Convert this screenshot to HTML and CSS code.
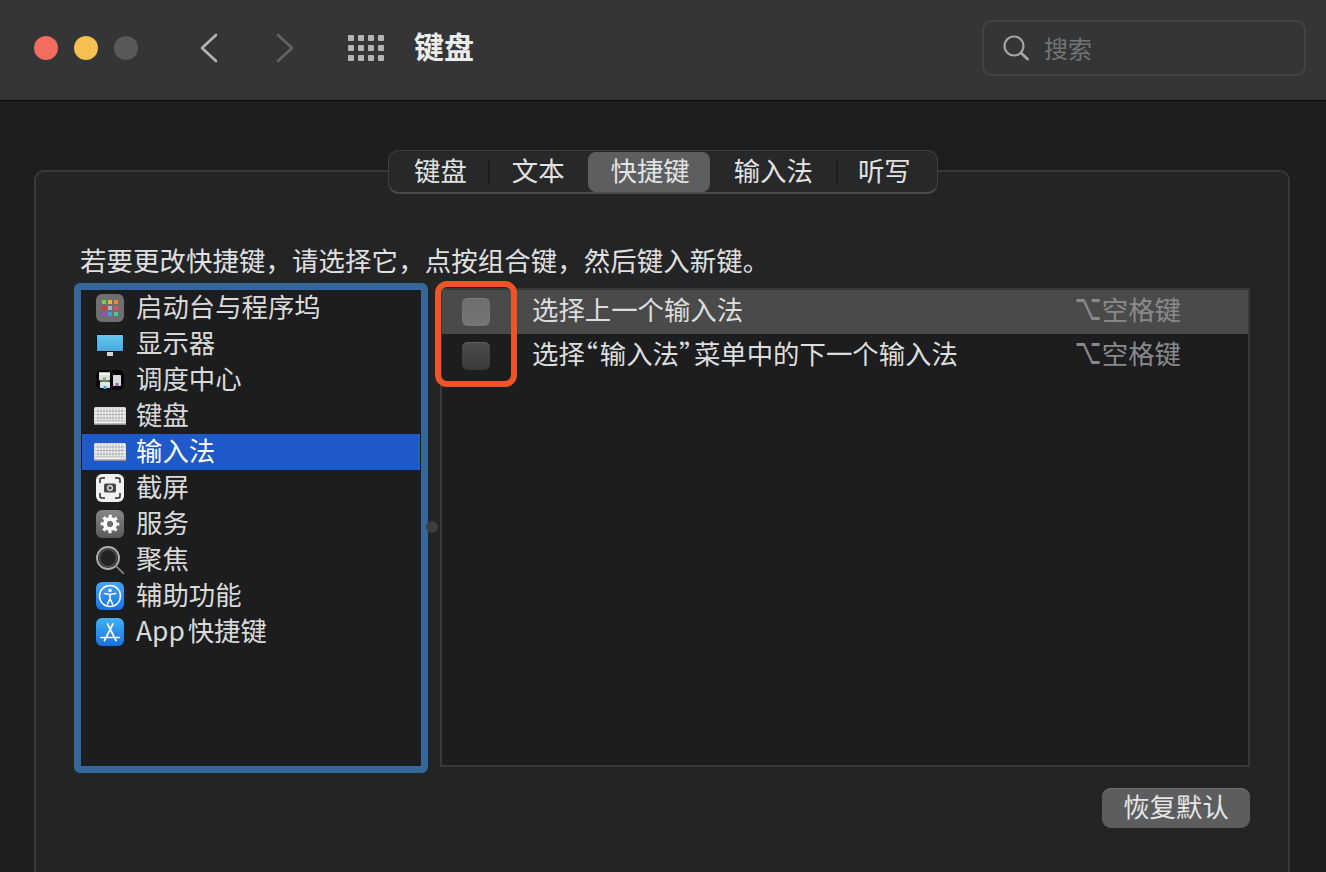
FILE: index.html
```html
<!DOCTYPE html>
<html lang="zh-CN">
<head>
<meta charset="utf-8">
<title>键盘</title>
<link rel="stylesheet" href="styles.css">
</head>
<body>
<div class="window">
  <header class="titlebar">
    <div class="lights">
      <span class="light red"></span>
      <span class="light yellow"></span>
      <span class="light gray"></span>
    </div>
    <svg class="chev back" width="20" height="30" viewBox="0 0 20 30"><path d="M17 2 3 15l14 13" fill="none" stroke="#b4b4b5" stroke-width="2.6" stroke-linecap="round" stroke-linejoin="round"/></svg>
    <svg class="chev forward" width="20" height="30" viewBox="0 0 20 30"><path d="M3 2l14 13L3 28" fill="none" stroke="#636466" stroke-width="2.6" stroke-linecap="round" stroke-linejoin="round"/></svg>
    <div class="grid-icon">
      <i></i><i></i><i></i><i></i><i></i><i></i><i></i><i></i><i></i><i></i><i></i><i></i>
    </div>
    <h1 class="title">键盘</h1>
    <div class="search">
      <svg width="28" height="28" viewBox="0 0 28 28"><circle cx="12" cy="12" r="9.5" fill="none" stroke="#a5a5a6" stroke-width="2.2"/><path d="M19 19l6.5 6" stroke="#a5a5a6" stroke-width="3" stroke-linecap="round"/></svg>
      <span>搜索</span>
    </div>
  </header>

  <main class="content">
    <section class="panel">
      <nav class="tabs">
        <span class="tab t1">键盘</span>
        <span class="sep"></span>
        <span class="tab t2">文本</span>
        <span class="tab t3 active">快捷键</span>
        <span class="tab t4">输入法</span>
        <span class="sep"></span>
        <span class="tab t5">听写</span>
      </nav>
      <p class="hint">若要更改快捷键，请选择它，点按组合键，然后键入新键。</p>
      <div class="columns">
        <ul class="sidebar">
          <li class="item">
            <svg class="ic" viewBox="0 0 28 28"><rect width="28" height="28" rx="6" fill="#6f6f70"/><g><rect x="6" y="6" width="4" height="4" fill="#6fcf5f"/><rect x="12" y="6" width="4" height="4" fill="#f0b429"/><rect x="18" y="6" width="4" height="4" fill="#ee8a2d"/><rect x="6" y="12" width="4" height="4" fill="#e0352f"/><rect x="12" y="12" width="4" height="4" fill="#a9b4b8"/><rect x="18" y="12" width="4" height="4" fill="#e64a5c"/><rect x="6" y="18" width="4" height="4" fill="#8e4fd0"/><rect x="12" y="18" width="4" height="4" fill="#3aa0ec"/><rect x="18" y="18" width="4" height="4" fill="#47c7a5"/></g></svg>
            <span>启动台与程序坞</span>
          </li>
          <li class="item">
            <svg class="ic" viewBox="0 0 28 28"><rect x="0" y="4" width="28" height="18" rx="1" fill="#0b0b0c"/><defs><linearGradient id="scr" x1="0" y1="0" x2="0" y2="1"><stop offset="0" stop-color="#62c9f0"/><stop offset="1" stop-color="#46a9dc"/></linearGradient></defs><rect x="1" y="5" width="26" height="16" fill="url(#scr)"/><rect x="11" y="22" width="6" height="4" fill="#d5d5d5"/></svg>
            <span>显示器</span>
          </li>
          <li class="item">
            <svg class="ic mc" viewBox="0 0 28 20"><rect width="28" height="20" rx="5" fill="#060607"/><rect x="3" y="2.500" width="11" height="8" rx="1" fill="#dcdcdc"/><rect x="3" y="2.500" width="11" height="2.500" fill="#f3f3f3"/><rect x="7" y="7.500" width="3" height="3" fill="#62c959"/><rect x="17" y="5" width="8" height="11" rx="1" fill="#d8d8d8"/><rect x="19.500" y="13" width="3" height="3" fill="#a65fd4"/><rect x="4" y="11.500" width="10" height="6.500" rx="1" fill="#e4e4e4"/><rect x="7.500" y="16" width="3" height="3" fill="#3aa0ec"/></svg>
            <span>调度中心</span>
          </li>
          <li class="item">
            <svg class="ic kb" viewBox="0 0 32 20"><use href="#keyboard"/></svg>
            <span>键盘</span>
          </li>
          <li class="item selected">
            <svg class="ic kb" viewBox="0 0 32 20">
              <g id="keyboard">
                <rect x="0" y="1" width="32" height="18" rx="1.500" fill="#d9d9d9"/>
                <rect x="1" y="2" width="30" height="15.500" fill="#f4f4f4"/>
                <path d="M1 5h30M1 8.500h30M1 12h30M1 15h30" stroke="#a8a8a8" stroke-width=".8"/>
                <path d="M4 2v13M7 2v13M10 2v13M13 2v13M16 2v13M19 2v13M22 2v13M25 2v13M28 2v13" stroke="#a8a8a8" stroke-width=".8"/>
                <rect x="0" y="17.500" width="32" height="1.500" fill="#8c8c8c"/>
              </g>
            </svg>
            <span>输入法</span>
          </li>
          <li class="item">
            <svg class="ic" viewBox="0 0 28 28"><rect width="28" height="28" rx="6" fill="#f1f1f1"/><path d="M4 9V6a2 2 0 0 1 2-2h3M19 4h3a2 2 0 0 1 2 2v3M24 19v3a2 2 0 0 1-2 2h-3M9 24H6a2 2 0 0 1-2-2v-3" fill="none" stroke="#2a2a2a" stroke-width="1.500"/><rect x="8" y="9.500" width="12" height="9" rx="1.500" fill="#4a4a4a"/><circle cx="14" cy="14" r="3" fill="#e6e6e6"/><circle cx="14" cy="14" r="1.700" fill="#4a4a4a"/></svg>
            <span>截屏</span>
          </li>
          <li class="item">
            <svg class="ic" viewBox="0 0 28 28"><defs><linearGradient id="gear" x1="0" y1="0" x2="0" y2="1"><stop offset="0" stop-color="#858586"/><stop offset="1" stop-color="#5a5a5b"/></linearGradient></defs><rect width="28" height="28" rx="6" fill="url(#gear)"/><circle cx="14" cy="14" r="7.800" fill="none" stroke="#fff" stroke-width="3" stroke-dasharray="3.060 3.067" stroke-dashoffset="1.530"/><circle cx="14" cy="14" r="5" fill="none" stroke="#fff" stroke-width="4"/><circle cx="14" cy="14" r="2.800" fill="#6d6d6e"/></svg>
            <span>服务</span>
          </li>
          <li class="item">
            <svg class="ic" viewBox="0 0 28 28"><circle cx="12" cy="12" r="11" fill="#2f3032" stroke="#b0b0b0" stroke-width="1.800"/><circle cx="12" cy="12" r="8.500" fill="#222325" stroke="#55565a" stroke-width="1.200"/><path d="M20 20l7.500 7.500" stroke="#8d8d8d" stroke-width="1.600" stroke-linecap="round"/></svg>
            <span>聚焦</span>
          </li>
          <li class="item">
            <svg class="ic" viewBox="0 0 28 28"><defs><linearGradient id="acc" x1="0" y1="0" x2="0" y2="1"><stop offset="0" stop-color="#45a6fb"/><stop offset="1" stop-color="#1a72ea"/></linearGradient></defs><rect width="28" height="28" rx="6" fill="url(#acc)"/><circle cx="14" cy="14" r="10.500" fill="none" stroke="#fff" stroke-width="1.500"/><circle cx="14" cy="8.500" r="1.800" fill="#fff"/><path d="M8.500 11.500 14 12.500l5.500-1M14 12.500v4M14 16.500l-2.500 5.500M14 16.500l2.500 5.500" fill="none" stroke="#fff" stroke-width="1.700" stroke-linecap="round"/></svg>
            <span>辅助功能</span>
          </li>
          <li class="item">
            <svg class="ic" viewBox="0 0 28 28"><defs><linearGradient id="app" x1="0" y1="0" x2="0" y2="1"><stop offset="0" stop-color="#3fb2f6"/><stop offset="1" stop-color="#1a6fe0"/></linearGradient></defs><rect width="28" height="28" rx="6" fill="url(#app)"/><path d="M17 6 8.500 22.500M11.500 6 20 22.500M5 19.500h18.500" fill="none" stroke="#fff" stroke-width="1.700" stroke-linecap="round"/></svg>
            <span class="app-label">App 快捷键</span>
          </li>
        </ul>
        <span class="splitter"></span>
        <div class="table">
          <div class="row highlighted">
            <span class="checkbox light-box"></span>
            <span class="label">选择上一个输入法</span>
            <span class="keys"><b class="opt">⌥</b>空格键</span>
          </div>
          <div class="row">
            <span class="checkbox"></span>
            <span class="label">选择<span class="q">“</span>输入法<span class="q">”</span>菜单中的下一个输入法</span>
            <span class="keys"><b class="opt">⌥</b>空格键</span>
          </div>
          <span class="annotation"></span>
        </div>
      </div>
      <div class="actions">
        <button class="restore" type="button">恢复默认</button>
      </div>
    </section>
  </main>
</div>
</body>
</html>
```

FILE: styles.css
```css
* { box-sizing: border-box; }
html, body { margin: 0; padding: 0; background: #1d1e20; }
body {
  font-family: "Noto Sans CJK SC", "Liberation Sans", sans-serif;
  color: #dcdcdc;
}
.window { width: 1326px; height: 872px; overflow: hidden; background: #1d1e20; }

.titlebar {
  height: 101px;
  display: flex;
  align-items: center;
  padding: 0 20px 5px 34px;
  background: #343537;
  border-bottom: 1px solid #0b0b0c;
}
.lights { display: flex; gap: 16px; }
.light { width: 24px; height: 24px; border-radius: 50%; }
.red { background: #f26d60; }
.yellow { background: #f6bf4f; }
.gray { background: #58595b; }
.chev { flex: none; }
.back { margin-left: 61px; }
.forward { margin-left: 56px; }
.grid-icon {
  margin-left: 53px;
  display: grid;
  grid-template-columns: repeat(4, 6px);
  grid-auto-rows: 6px;
  gap: 4px;
}
.grid-icon i { background: #b4b4b5; border-radius: 1px; }
.title {
  margin: 0 0 6px 30px;
  font-size: 30px;
  line-height: 40px;
  font-weight: 700;
  color: #ececec;
}
.search {
  margin-left: auto;
  width: 324px;
  height: 56px;
  display: flex;
  align-items: center;
  gap: 14px;
  padding-left: 18px;
  border: 2px solid #414244;
  border-radius: 10px;
  color: #737475;
  font-size: 24px;
}
.search svg { flex: none; }

.content { padding: 69px 36px 0 34px; }
.panel {
  height: 760px;
  background: #232426;
  border: 2px solid #39393b;
  border-radius: 10px;
  padding: 0 38px 0 38px;
}
.tabs {
  width: 550px;
  height: 44px;
  margin: -22px auto 0;
  padding-left: 2px;
  display: flex;
  align-items: center;
  position: relative;
  left: 1px;
  background: #27282a;
  border: 1px solid #3d3e40;
  border-bottom: 2px solid #4a4b4d;
  border-radius: 11px;
  font-size: 26.4px;
}
.tab { height: 40px; line-height: 36px; color: #e2e2e2; white-space: nowrap; }
.t1 { padding: 0 21px 0 23px; }
.t2 { padding: 0 23px 0 22px; }
.t3 { padding: 0 20px 0 23px; }
.t4 { padding: 0 23px 0 24px; }
.t5 { padding: 0 0 0 20px; }
.sep { width: 2px; height: 24px; background: #1b1c1e; flex: none; }
.active { background: #5d5e60; border-radius: 8px; }

.hint {
  margin: 46px 0 0 6px;
  font-size: 26.4px;
  letter-spacing: .12px;
  line-height: 40px;
  color: #e0e0e0;
  white-space: nowrap;
}
.columns { display: flex; margin-top: 3px; position: relative; }
.sidebar {
  width: 354px;
  height: 490px;
  margin: 0;
  padding: 0 1px;
  list-style: none;
  border: 7px solid #35679a;
  border-radius: 6px;
  background: #1c1d1f;
  flex: none;
}
.item {
  height: 36px;
  display: flex;
  align-items: center;
  padding-left: 14px;
  font-size: 26.4px;
  line-height: 36px;
  color: #dadada;
  white-space: nowrap;
}
.item > span { margin-bottom: 4px; }
.item.selected { background: #2059c9; color: #fff; }
.ic { width: 28px; height: 28px; flex: none; margin-right: 12px; }
.ic.kb { width: 32px; height: 20px; margin-left: -2px; margin-right: 10px; }
.ic.mc { height: 20px; }
.app-label { word-spacing: -3px; }
.splitter {
  width: 12px;
  flex: none;
  position: relative;
}
.splitter::after {
  content: "";
  position: absolute;
  left: -2px;
  top: 238px;
  width: 12px;
  height: 12px;
  border-radius: 50%;
  background: #3c3d3f;
}
.table {
  position: relative;
  width: 810px;
  height: 479px;
  margin-top: 5px;
  background: #1c1d1f;
  border: 2px solid #38393b;
}
.row {
  height: 44px;
  display: flex;
  align-items: center;
  font-size: 26.4px;
  color: #dedede;
  white-space: nowrap;
}
.highlighted { background: #4a4a4b; }
.checkbox {
  width: 28px;
  height: 28px;
  margin-left: 20px;
  margin-right: 42px;
  flex: none;
  border-radius: 6px;
  background: linear-gradient(#4b4c4e, #38393b);
  box-shadow: inset 0 1px 0 #5e5f60;
}
.light-box { background: linear-gradient(#6d6d6e, #767677); box-shadow: inset 0 1px 0 #808081; }
.label { flex: none; margin-bottom: 6px; line-height: 38px; }
.q { font-feature-settings: "halt"; letter-spacing: 1.8px; }
.keys {
  margin-left: auto;
  margin-right: 67px;
  margin-bottom: 6px;
  line-height: 38px;
  color: #8a8a8b;
}
.opt {
  display: inline-block;
  width: 27px;
  font-family: "DejaVu Sans", sans-serif;
  font-weight: 400;
  font-size: 23px;
  line-height: 30px;
  transform: scaleY(1.6);
  transform-origin: 50% 75%;
}
.annotation {
  position: absolute;
  left: -7px;
  top: -9px;
  width: 82px;
  height: 106px;
  border: 6px solid #f05426;
  border-radius: 12px;
}
.actions { display: flex; justify-content: flex-end; margin-top: 15px; }
.restore {
  width: 148px;
  height: 40px;
  padding: 0 0 4px;
  border: 0;
  border-radius: 9px;
  background: #5c5d5f;
  box-shadow: inset 0 1px 0 #6e6f71;
  color: #e6e6e6;
  font-family: inherit;
  font-size: 26.4px;
  line-height: 36px;
}
```
